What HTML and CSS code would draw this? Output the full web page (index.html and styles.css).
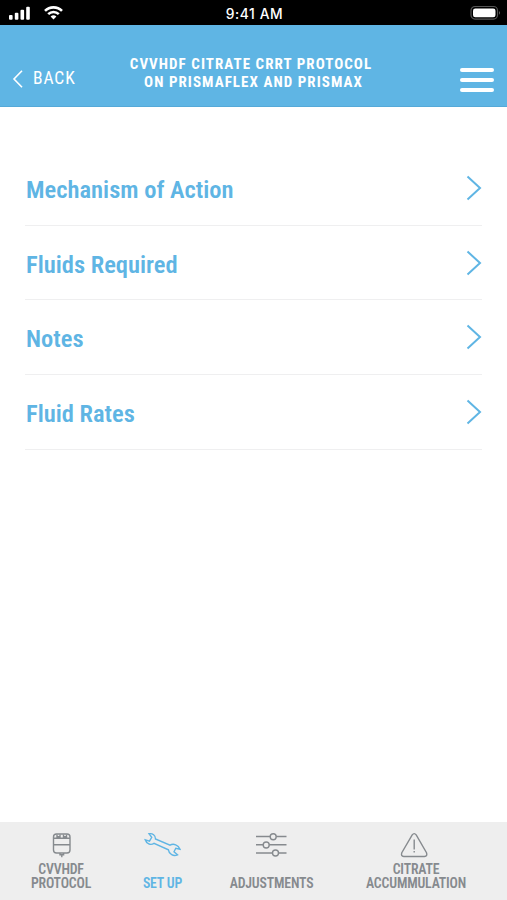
FILE: index.html
```html
<!DOCTYPE html>
<html lang="en">
<head>
<meta charset="utf-8">
<title>CVVHDF Citrate CRRT Protocol</title>
<link rel="stylesheet" href="styles.css">
</head>
<body>
<div class="status">
  <svg class="signals" width="60" height="26" viewBox="0 0 60 26" fill="#fff">
    <rect x="1" y="15" width="3.6" height="4.7" rx="1"/><rect x="6.8" y="12.8" width="3.6" height="6.9" rx="1"/><rect x="12.5" y="9.8" width="3.6" height="9.9" rx="1"/><rect x="18.2" y="6.8" width="3.6" height="12.9" rx="1"/>
    <g fill="none" stroke="#fff" stroke-width="2.6"><path d="M37 10.9a12 12 0 0 1 17 0"/><path d="M40.2 14.2a7.5 7.5 0 0 1 10.6 0"/></g>
    <path d="M42.6 16.6a4.1 4.1 0 0 1 5.8 0L45.5 19.6z"/>
  </svg>
  <span class="time">9:41 AM</span>
  <svg class="battery" width="32" height="16" viewBox="0 0 32 16"><rect x="1" y="1.5" width="26.5" height="12.6" rx="4" fill="none" stroke="#555" stroke-width="1.2"/><rect x="3" y="3.5" width="22.5" height="8.7" rx="2.3" fill="#fff"/><path d="M29 6q2 1.8 0 3.7z" fill="#666"/></svg>
</div>
<header class="header">
  <a class="back"><svg width="12" height="20" viewBox="0 0 12 20"><path d="M10 1.7 2 10l8 8.3"/></svg><span class="cond">BACK</span></a>
  <h1 class="title"><span class="cond">CVVHDF CITRATE CRRT PROTOCOL</span><span class="cond second">ON PRISMAFLEX AND PRISMAX</span></h1>
  <div class="menu"><i></i><i></i><i></i></div>
</header>
<main class="list">
  <a class="row"><span class="cond">Mechanism of Action</span><svg class="chevron" width="18" height="28" viewBox="0 0 18 28"><path d="M3.5 2.5 16 14 3.5 25.5"/></svg></a>
  <a class="row"><span class="cond">Fluids Required</span><svg class="chevron" width="18" height="28" viewBox="0 0 18 28"><path d="M3.5 2.5 16 14 3.5 25.5"/></svg></a>
  <a class="row"><span class="cond">Notes</span><svg class="chevron" width="18" height="28" viewBox="0 0 18 28"><path d="M3.5 2.5 16 14 3.5 25.5"/></svg></a>
  <a class="row"><span class="cond">Fluid Rates</span><svg class="chevron" width="18" height="28" viewBox="0 0 18 28"><path d="M3.5 2.5 16 14 3.5 25.5"/></svg></a>
</main>
<nav class="tabs">
  <a class="tab protocol"><svg width="40" height="30" viewBox="0 0 40 30"><rect x="12.5" y="4" width="16.5" height="19" rx="3"/><path d="M12.5 8.3H29M12.5 14.7H29M16 4.5v2.3h3V4.5M22.5 4.5v2.3h3V4.5M19 23v1.8h3.6V23M20.8 24.8v2.4"/></svg><span class="label"><span class="cond">CVVHDF</span><span class="cond">PROTOCOL</span></span></a>
  <a class="tab setup active"><svg width="40" height="30" viewBox="0 0 40 30"><path d="M6 3.8C9.5 3 12.6 5.3 12.5 9L27 15.2C30.5 13.1 35.3 15 37 19.2L32.8 18.2 31 21.8 34.5 24.8C30.5 26.6 26 24.3 25.4 19.8L11 13.4C7.5 15.6 3.5 13.8 2.2 9.8L6.5 11.2 8.7 7.3z"/></svg><span class="label"><span class="cond">SET UP</span></span></a>
  <a class="tab adjust"><svg width="40" height="30" viewBox="0 0 40 30"><path d="M4 6.5H18.2m6 0h10.3M4 14.8H11.2m6 0H34.5M4 23H20.5m6 0H34.5"/><circle cx="21.2" cy="6.8" r="3"/><circle cx="14.2" cy="15" r="3"/><circle cx="23.5" cy="23" r="3"/></svg><span class="label"><span class="cond">ADJUSTMENTS</span></span></a>
  <a class="tab citrate"><svg width="40" height="30" viewBox="0 0 40 30"><path d="M16.2 4.9q2-2.6 4 0L30.5 22.7q1.2 3.6-2 3.8H7.8q-3.2-.2-2-3.8zM18.2 9.5v10M18.2 21v1.5"/></svg><span class="label"><span class="cond">CITRATE</span><span class="cond">ACCUMMULATION</span></span></a>
</nav>
</body>
</html>
```
FILE: styles.css
```css
* { box-sizing: border-box; }
body { margin: 0; width: 507px; height: 900px; display: flex; flex-direction: column; background: #fff; color: #5fb5e4; font-family: "Roboto Condensed", Roboto, sans-serif; font-stretch: 75%; overflow: hidden; }
svg { display: block; flex: none; }
.cond { display: block; white-space: nowrap; }
.status { height: 25px; background: #000; display: grid; grid-template-columns: 1fr auto 1fr; color: #fff; padding: 0 6px 0 8px; }
.time { font: 500 13.8px/28px Inter, sans-serif; letter-spacing: .6px; }
.battery { justify-self: end; margin: 5px -1px 0 0; }
.header { height: 82px; background: #5fb5e4; color: #fff; display: flex; align-items: flex-start; justify-content: space-between; padding: 0 13px 0 12px; border-bottom: 1px solid #55a9d8; }
.back { display: flex; gap: 9px; align-items: center; width: 110px; margin-top: 43px; font-size: 17.5px; line-height: 21px; letter-spacing: .9px; }
.back path { fill: none; stroke: #fff; stroke-width: 1.6; }
.title { margin: 31px 0 0; font-size: 15px; line-height: 17.5px; letter-spacing: 1.05px; font-weight: 700; text-align: center; }
.second { padding-left: 5px; }
.menu { width: 114px; margin-top: 43px; display: flex; flex-direction: column; align-items: flex-end; gap: 6.2px; }
.menu i { width: 34px; height: 4px; border-radius: 2px; background: #fff; }
.list { margin: 44px 25px 0; flex: 1; }
.row { height: 74.7px; border-bottom: 1px solid #efeff0; display: flex; justify-content: space-between; padding: 23px 0 0 1px; font-size: 24.5px; font-weight: 650; line-height: 32px; }
.chevron path { fill: none; stroke: #5fb5e4; stroke-width: 2; }
.tabs { height: 78px; background: #eee; display: grid; grid-template-columns: 122px 81px 137px 152px; color: #868a8e; }
.tab { display: flex; flex-direction: column; align-items: center; padding-top: 8px; }
.tab svg { fill: none; stroke: currentColor; stroke-width: 1.4; }
.label { height: 30px; display: flex; flex-direction: column; justify-content: flex-end; align-items: center; font-size: 13.8px; letter-spacing: -.17px; line-height: 13.5px; font-weight: 650; }
.active { color: #5fb5e4; }
```
